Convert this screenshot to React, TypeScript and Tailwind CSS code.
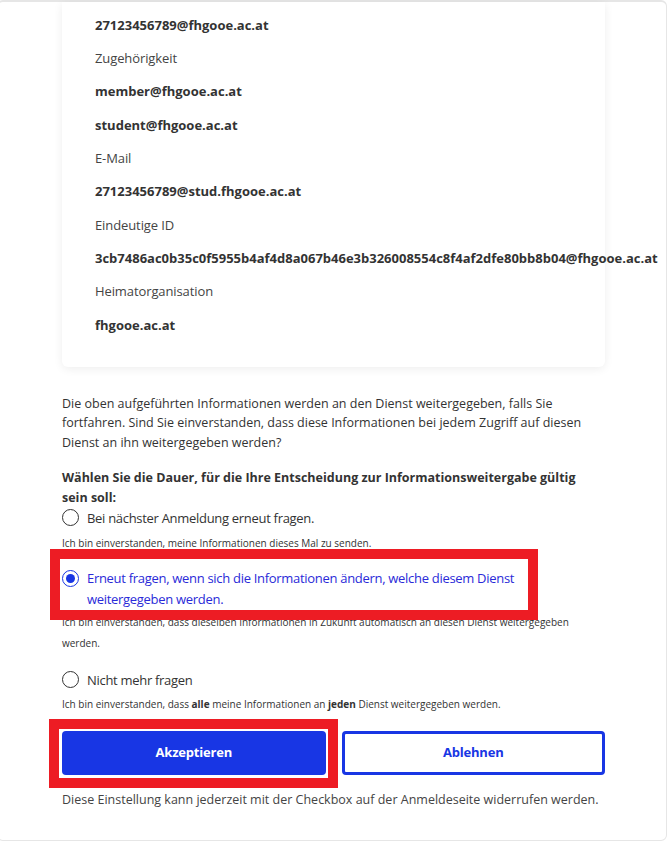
import React from "react";

const ATTRIBUTES: { text: string; bold: boolean }[] = [
  { text: "27123456789@fhgooe.ac.at", bold: true },
  { text: "Zugehörigkeit", bold: false },
  { text: "member@fhgooe.ac.at", bold: true },
  { text: "student@fhgooe.ac.at", bold: true },
  { text: "E-Mail", bold: false },
  { text: "27123456789@stud.fhgooe.ac.at", bold: true },
  { text: "Eindeutige ID", bold: false },
  { text: "3cb7486ac0b35c0f5955b4af4d8a067b46e3b326008554c8f4af2dfe80bb8b04@fhgooe.ac.at", bold: true },
  { text: "Heimatorganisation", bold: false },
  { text: "fhgooe.ac.at", bold: true },
];

function Radio({ checked }: { checked?: boolean }) {
  return checked ? (
    <span className="flex h-[17px] w-[17px] shrink-0 items-center justify-center rounded-full border-[1.5px] border-[#1836e4]">
      <span className="h-[9px] w-[9px] rounded-full bg-[#1836e4]" />
    </span>
  ) : (
    <span className="h-[17px] w-[17px] shrink-0 rounded-full border-[1.5px] border-[#333]" />
  );
}

export default function App() {
  return (
    <div className="h-[842px] overflow-hidden bg-white font-['Open_Sans',sans-serif] text-[#333]">
      <div className="-ml-[3px] h-[841px] w-[670px] rounded-[6px] border border-t-2 border-[#e6e6e6]">
        <div className="pl-[64px] pr-[61px]">
          {/* attribute card */}
          <div className="rounded-b-[6px] bg-white px-[33px] pb-[25px] pt-[7px] shadow-[0_2px_10px_rgba(0,0,0,0.07)]">
            {ATTRIBUTES.map((a) => (
              <div
                key={a.text}
                className={`flex h-[33.3px] items-center whitespace-nowrap text-[13px] ${
                  a.bold ? "font-bold text-[#333]" : "tracking-[-0.1px] text-[#444]"
                }`}
              >
                {a.text}
              </div>
            ))}
          </div>

          <p className="mt-[27px] text-[12.5px] leading-[19.5px] text-[#333]">
            Die oben aufgeführten Informationen werden an den Dienst weitergegeben, falls Sie
            <br />
            fortfahren. Sind Sie einverstanden, dass diese Informationen bei jedem Zugriff auf diesen
            <br />
            Dienst an ihn weitergegeben werden?
          </p>

          <p className="mt-[15.5px] text-[12.5px] font-bold leading-[20px] text-[#333]">
            Wählen Sie die Dauer, für die Ihre Entscheidung zur Informationsweitergabe gültig
            <br />
            sein soll:
          </p>

          {/* option 1 */}
          <label className="flex items-center gap-[8px] text-[13px] leading-[20px] tracking-[-0.3px]">
            <Radio />
            <span>Bei nächster Anmeldung erneut fragen.</span>
          </label>
          <p className="mt-[5.5px] text-[10px] leading-[21px] text-[#333]">
            Ich bin einverstanden, meine Informationen dieses Mal zu senden.
          </p>

          {/* option 2 (highlighted) */}
          <div className="relative mt-[14px]">
            <label className="flex items-start gap-[8px] text-[13px] leading-[21px] tracking-[-0.3px] text-[#2a2ad8]">
              <span className="mt-[2px]">
                <Radio checked />
              </span>
              <span>
                Erneut fragen, wenn sich die Informationen ändern, welche diesem Dienst
                <br />
                weitergegeben werden.
              </span>
            </label>
            <p className="mt-[2px] text-[10px] leading-[21px] text-[#333]">
              Ich bin einverstanden, dass dieselben Informationen in Zukunft automatisch an diesen
              Dienst weitergegeben
              <br />
              werden.
            </p>
            <div className="pointer-events-none absolute -left-[12px] -top-[19.5px] h-[71px] w-[488px] border-[10px] border-[#ed1c24]" />
          </div>

          {/* option 3 */}
          <label className="mt-[15.5px] flex items-center gap-[8px] text-[13px] leading-[20px] tracking-[-0.3px]">
            <Radio />
            <span>Nicht mehr fragen</span>
          </label>
          <p className="mt-[4.5px] text-[10px] leading-[21px] text-[#333]">
            Ich bin einverstanden, dass <b>alle</b> meine Informationen an <b>jeden</b> Dienst
            weitergegeben werden.
          </p>

          {/* actions */}
          <div className="mt-[15.5px] grid grid-cols-2 gap-[16px]">
            <div className="relative">
              <button className="h-[44px] w-full rounded-[4px] bg-[#1836e4] text-[13px] font-bold tracking-[-0.2px] text-white">
                Akzeptieren
              </button>
              <div className="pointer-events-none absolute -bottom-[13px] -left-[13px] -right-[12px] -top-[12px] border-[10px] border-[#ed1c24]" />
            </div>
            <button className="h-[44px] w-full rounded-[4px] border-[3px] border-[#1836e4] bg-white text-[13px] font-bold tracking-[-0.2px] text-[#1836e4]">
              Ablehnen
            </button>
          </div>

          <p className="mt-[15px] whitespace-nowrap text-[12.5px] leading-[20px] text-[#444]">
            Diese Einstellung kann jederzeit mit der Checkbox auf der Anmeldeseite widerrufen werden.
          </p>
        </div>
      </div>
    </div>
  );
}
